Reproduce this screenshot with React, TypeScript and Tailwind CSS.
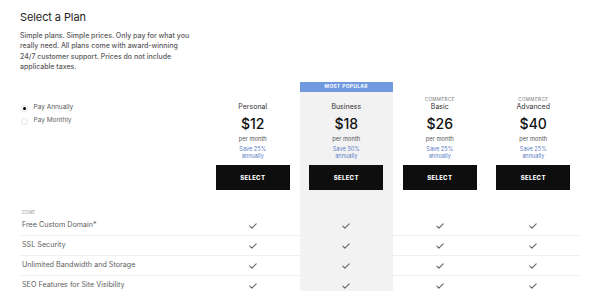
import React from "react";

const plans = [
  { name: "Personal", price: "$12", save: "Save 25%", commerce: false, popular: false },
  { name: "Business", price: "$18", save: "Save 30%", commerce: false, popular: true },
  { name: "Basic", price: "$26", save: "Save 25%", commerce: true, popular: false },
  { name: "Advanced", price: "$40", save: "Save 25%", commerce: true, popular: false },
];

const features = [
  "Free Custom Domain*",
  "SSL Security",
  "Unlimited Bandwidth and Storage",
  "SEO Features for Site Visibility",
];

const cols = "grid grid-cols-[186px_93.5px_93.5px_93.5px_93.5px]";

function Check() {
  return (
    <svg width="8" height="6" viewBox="0 0 8 6" fill="none">
      <path d="M0.8 3.1 L2.9 5.2 L7.2 0.8" stroke="#666" strokeWidth="1.1" strokeLinecap="round" strokeLinejoin="round" />
    </svg>
  );
}

export default function App() {
  return (
    <div
      className="h-[291px] w-[600px] overflow-hidden bg-white px-[20px] pt-[9.5px]"
      style={{ fontFamily: "Inter, 'Liberation Sans', sans-serif" }}
    >
      <h1 className="text-[11px] leading-[14px] text-[#222] tracking-[-0.1px]">Select a Plan</h1>
      <p className="mt-[7.5px] text-[7px] leading-[10.3px] font-medium text-[#5a5a5a]">
        <span className="block whitespace-nowrap">Simple plans. Simple prices. Only pay for what you</span>
        <span className="block whitespace-nowrap">really need. All plans come with award-winning</span>
        <span className="block whitespace-nowrap">24/7 customer support. Prices do not include</span>
        <span className="block whitespace-nowrap">applicable taxes.</span>
      </p>

      <div className={`${cols} mt-[9.9px]`}>
        <div className="pt-[19.5px]">
          <div className="flex h-[13px] items-center gap-[6px] pl-[0.5px]">
            <span className="flex h-[7px] w-[7px] items-center justify-center rounded-full border border-[#e2e2e2]">
              <span className="h-[3px] w-[3px] rounded-full bg-black" />
            </span>
            <span className="text-[6.5px] text-[#555]">Pay Annually</span>
          </div>
          <div className="flex h-[13px] items-center gap-[6px] pl-[0.5px]">
            <span className="h-[7px] w-[7px] rounded-full border border-[#e2e2e2]" />
            <span className="text-[6.5px] text-[#666]">Pay Monthly</span>
          </div>
        </div>
        {plans.map((p) => (
          <div
            key={p.name}
            className={`flex flex-col items-center pb-[19px] ${p.popular ? "bg-[#f2f2f2]" : ""}`}
          >
            <div
              className={`flex h-[10px] w-full items-center justify-center text-[4.8px] font-bold tracking-[0.4px] text-white ${
                p.popular ? "bg-[#7099e0]" : ""
              }`}
            >
              {p.popular ? "MOST POPULAR" : ""}
            </div>
            <div className="mt-[4.5px] h-[6px] text-[4.6px] leading-[6px] tracking-[0.4px] text-[#777]">
              {p.commerce ? "COMMERCE" : ""}
            </div>
            <div className="h-[8px] text-[7px] leading-[8px] text-[#333]">{p.name}</div>
            <div className="mt-[4px] h-[18px] text-[14px] font-medium leading-[18px] text-[#111]">{p.price}</div>
            <div className="mt-[2px] h-[8px] text-[5.8px] leading-[8px] text-[#555]">per month</div>
            <div className="mt-[3.5px] text-[5.6px] leading-[7px] text-[#5a7ec6]">{p.save}</div>
            <div className="text-[5.6px] leading-[7px] text-[#5a7ec6]">annually</div>
            <button className="mt-[5px] flex h-[25px] w-[74px] items-center justify-center bg-[#0e0e0e] text-[6px] font-extrabold tracking-[0.3px] text-white">
              SELECT
            </button>
          </div>
        ))}
      </div>

      <div className={cols}>
        <div className="h-[7px] pl-[2px] text-[4.4px] leading-[7px] tracking-[0.3px] text-[#888]">CORE</div>
        <div />
        <div className="bg-[#f2f2f2]" />
        <div />
        <div />
      </div>

      {features.map((f) => (
        <div key={f} className={cols}>
          <div className="flex h-[20px] items-center border-b border-[#f0f0f0] pl-[2px] text-[7.2px] text-[#606060]">
            {f}
          </div>
          {plans.map((p) => (
            <div
              key={p.name}
              className={`flex h-[20px] items-center justify-center border-b ${
                p.popular ? "border-[#f2f2f2] bg-[#f2f2f2]" : "border-[#f0f0f0]"
              }`}
            >
              <Check />
            </div>
          ))}
        </div>
      ))}
    </div>
  );
}
